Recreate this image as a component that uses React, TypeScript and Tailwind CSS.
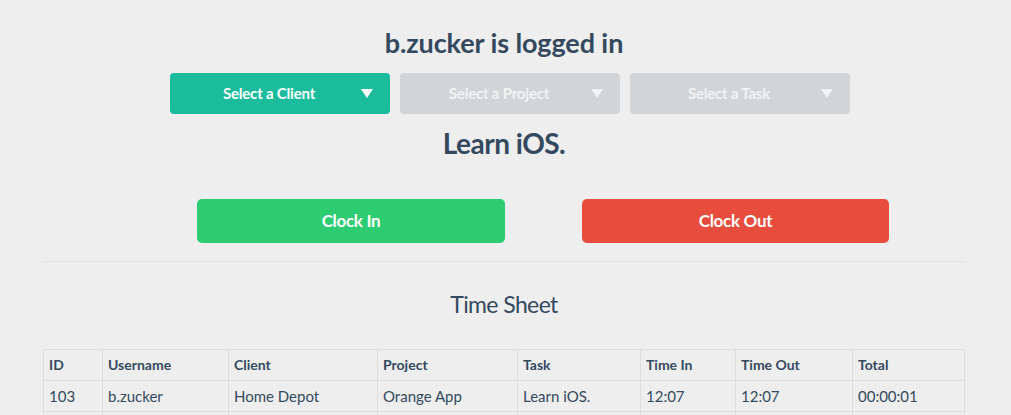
import React from "react";

const rows = [
  { id: "103", username: "b.zucker", client: "Home Depot", project: "Orange App", task: "Learn iOS.", timeIn: "12:07", timeOut: "12:07", total: "00:00:01" },
];

const Caret = () => (
  <svg width="12" height="10" viewBox="0 0 12 10" className="shrink-0">
    <path d="M0 0 L12 0 L6 9 Z" fill="currentColor" />
  </svg>
);

const Select = ({ label, active }: { label: string; active?: boolean }) => (
  <div
    className={
      active
        ? "flex items-center w-[220px] h-[41px] rounded-[4px] bg-[#1abc9c] text-white pl-[20px] pr-[17px]"
        : "flex items-center w-[220px] h-[41px] rounded-[4px] bg-[#d1d5d8] text-[#f1f3f4] pl-[20px] pr-[17px]"
    }
  >
    <span className="flex-1 text-center text-[15px] font-bold tracking-[-0.2px]">{label}</span>
    <span className="ml-[12px]"><Caret /></span>
  </div>
);

export default function App() {
  const th = "border border-[#dddddd] px-[5px] py-[6px] text-left font-bold text-[14px]";
  const td = "border border-[#dddddd] px-[5px] py-[6px] text-left font-normal text-[15px]";

  return (
    <div className="h-[415px] bg-[#eeeeee] text-[#34495e] font-['Lato','Liberation_Sans',sans-serif] overflow-hidden">
      <div className="pl-[43px] pr-[46px]">
        <h1 className="text-center text-[27px] font-bold leading-[32px] pt-[27px] tracking-[-0.1px]">b.zucker is logged in</h1>
        <div className="flex justify-center gap-[10px] mt-[14px] ml-[11px]">
          <Select label="Select a Client" active />
          <Select label="Select a Project" />
          <Select label="Select a Task" />
        </div>
        <h2 className="text-center text-[28px] font-bold leading-[34px] mt-[12px] tracking-[-0.5px]">Learn iOS.</h2>
        <div className="flex mt-[39px]">
          <button className="ml-[154px] w-[308px] h-[44px] rounded-[5px] bg-[#2ecc71] text-white text-[17px] font-bold tracking-[-0.3px]">Clock In</button>
          <button className="ml-[77px] w-[307px] h-[44px] rounded-[5px] bg-[#e74c3c] text-white text-[17px] font-bold tracking-[-0.3px]">Clock Out</button>
        </div>
        <hr className="mt-[18px] border-t border-[#e2e2e2]" />
        <h3 className="text-center text-[23px] font-normal leading-[30px] mt-[27px] tracking-[-0.6px]">Time Sheet</h3>
        <table className="w-full mt-[30px] border-collapse leading-[18px] table-fixed">
          <colgroup>
            <col className="w-[59px]" />
            <col className="w-[126px]" />
            <col className="w-[149px]" />
            <col className="w-[140px]" />
            <col className="w-[123px]" />
            <col className="w-[95px]" />
            <col className="w-[117px]" />
            <col />
          </colgroup>
          <thead>
            <tr>
              <th className={th}>ID</th>
              <th className={th}>Username</th>
              <th className={th}>Client</th>
              <th className={th}>Project</th>
              <th className={th}>Task</th>
              <th className={th}>Time In</th>
              <th className={th}>Time Out</th>
              <th className={th}>Total</th>
            </tr>
          </thead>
          <tbody>
            {rows.map((r) => (
              <tr key={r.id}>
                <td className={td}>{r.id}</td>
                <td className={td}>{r.username}</td>
                <td className={td}>{r.client}</td>
                <td className={td}>{r.project}</td>
                <td className={td}>{r.task}</td>
                <td className={td}>{r.timeIn}</td>
                <td className={td}>{r.timeOut}</td>
                <td className={td}>{r.total}</td>
              </tr>
            ))}
            <tr>
              <td className={td}>&nbsp;</td>
              <td className={td}></td>
              <td className={td}></td>
              <td className={td}></td>
              <td className={td}></td>
              <td className={td}></td>
              <td className={td}></td>
              <td className={td}></td>
            </tr>
          </tbody>
        </table>
      </div>
    </div>
  );
}
